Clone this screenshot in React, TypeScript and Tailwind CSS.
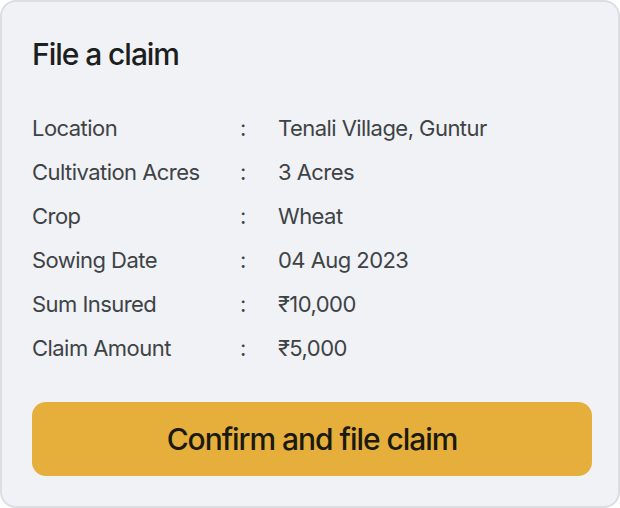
import React from "react";

const rows: [string, string][] = [
  ["Location", "Tenali Village, Guntur"],
  ["Cultivation Acres", "3 Acres"],
  ["Crop", "Wheat"],
  ["Sowing Date", "04 Aug 2023"],
  ["Sum Insured", "₹10,000"],
  ["Claim Amount", "₹5,000"],
];

export default function App() {
  return (
    <div
      className="w-[620px] h-[508px] bg-white"
      style={{ fontFamily: "Inter, 'Noto Sans', sans-serif" }}
    >
      <div className="w-full h-full rounded-[16px] border-2 border-[#dcdee2] bg-[#f0f2f5] px-[30px] pt-[34px]">
        <h1 className="text-[30px] leading-[36px] font-medium tracking-[-0.035em] text-[#1b201e]">
          File a claim
        </h1>
        <div className="mt-[34px] flex flex-col">
          {rows.map(([k, v]) => (
            <div key={k} className="flex h-[44px] items-center text-[22px] tracking-[-0.025em] text-[#3e4346]">
              <span className="w-[208px]">{k}</span>
              <span className="w-[38px]">:</span>
              <span>{v}</span>
            </div>
          ))}
        </div>
        <button className="mt-[32px] w-[560px] h-[74px] rounded-[14px] bg-[#e6af3c] text-[30px] font-medium tracking-[-0.035em] text-[#1a1a10]">
          Confirm and file claim
        </button>
      </div>
    </div>
  );
}
